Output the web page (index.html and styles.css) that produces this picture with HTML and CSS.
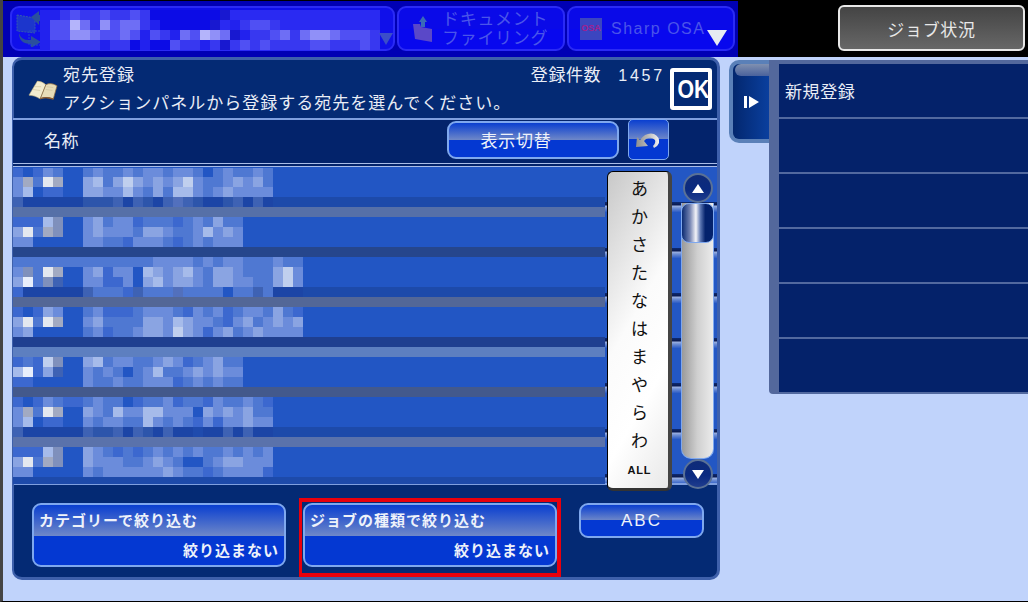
FILE: index.html
```html
<!DOCTYPE html>
<html lang="ja">
<head>
<meta charset="utf-8">
<title>宛先登録</title>
<link rel="stylesheet" href="styles.css">
</head>
<body>
<div class="screen">
  <header class="topbar">
    <nav class="modes">
      <div class="mode mode-wide">
        <svg class="mode-icon" viewBox="0 0 30 36" width="30" height="36">
          <path d="M2 4 L20 7 L20 22 L2 20 Z" fill="#1c36cc" stroke="#3558b0" stroke-dasharray="2 1"/>
          <path d="M16 6 L24 0 L24 4 L30 4 L30 10 L24 10 L24 14 Z" fill="#2a4f9c"/>
          <path d="M4 22 Q6 30 16 29 L16 25 L26 31 L16 37 L16 33 Q4 33 4 22 Z" fill="#2a4f9c"/>
          <path d="M14 20 H28 V34 H14 Z" fill="none" stroke="#2448c8" stroke-dasharray="2 1"/>
        </svg>
        <svg class="mode-mosaic" id="top-mosaic" width="360" height="40" shape-rendering="crispEdges"></svg>
        <span class="tri-faded"></span>
      </div>
      <div class="mode mode-doc">
        <svg viewBox="0 0 22 28" width="22" height="28">
          <path d="M7 7 L11 1 L15 7 H13 V12 H9 V7 Z" fill="#3a6ab8"/>
          <path d="M1 9 L8 9 L9 12 L20 14 V27 L3 24 Z" fill="#5a48c8"/>
        </svg>
        <span class="mode-label stack">ドキュメント<br>ファイリング</span>
      </div>
      <div class="mode mode-osa">
        <span class="osa-logo">OSA</span>
        <span class="mode-label osa-label">Sharp OSA</span>
        <span class="tri-white"></span>
      </div>
    </nav>
    <button class="job">ジョブ状況</button>
  </header>

  <main class="content">
    <section class="panel">
      <div class="head">
        <svg class="book" viewBox="0 0 32 22" width="30" height="21">
          <path d="M1 17 L10 2 Q15 2 19 6 L13 21 Q7 17 1 17 Z" fill="#f3ecd0" stroke="#b8a878" stroke-width=".6"/>
          <path d="M19 6 Q24 3 31 7 L27 21 Q19 18 13 21 Z" fill="#e7dcb8" stroke="#8a6a40" stroke-width=".8"/>
          <path d="M13 21 Q19 19 27 22 L27.5 20.5 Q19 18 13 20 Z" fill="#8a5a30"/>
          <path d="M7 8 L14 8 M5 11 L13 12 M20 8 L27 9 M19 11 L26 12" stroke="#cfc49c" stroke-width=".7"/>
        </svg>
        <div class="head-text">
          <div class="head-top">
            <span>宛先登録</span>
            <span class="count">登録件数<b class="count-num">1457</b></span>
          </div>
          <div class="head-msg">アクションパネルから登録する宛先を選んでください。</div>
        </div>
        <button class="ok"><span class="ok-text">OK</span></button>
      </div>

      <div class="name-row">
        <span class="name-label">名称</span>
        <button class="btn btn-switch">表示切替</button>
        <button class="btn btn-undo">
          <svg viewBox="0 0 26 18" width="26" height="18">
            <defs>
              <linearGradient id="undo-fill" x1="0" x2="1" y1="0" y2="0">
                <stop offset="0" stop-color="#8f8f8f"/>
                <stop offset=".5" stop-color="#b8b8b8"/>
                <stop offset="1" stop-color="#f2f2f2"/>
              </linearGradient>
            </defs>
            <path d="M0 16 L1 6 L4 9 Q10 1 18 3 Q24 6 23 12 Q22 15 18 17 L17 15 Q20 12 19 9 Q15 5 10 8 L8 10 L12 15 Z" fill="url(#undo-fill)"/>
          </svg>
        </button>
      </div>

      <div class="list">
        <div class="row"></div><div class="row"></div><div class="row"></div><div class="row"></div><div class="row"></div><div class="row"></div><div class="row"></div>
      </div>

      <div class="footer">
        <button class="btn filter"><span class="filter-top">カテゴリーで絞り込む</span><span class="filter-val">絞り込まない</span></button>
        <div class="marked">
          <button class="btn filter"><span class="filter-top">ジョブの種類で絞り込む</span><span class="filter-val">絞り込まない</span></button>
        </div>
        <button class="btn btn-abc">ABC</button>
      </div>

      <svg class="list-mosaic" id="list-mosaic" width="592" height="316" shape-rendering="crispEdges"></svg>

      <div class="kana">
        <span>あ</span><span>か</span><span>さ</span><span>た</span><span>な</span><span>は</span><span>ま</span><span>や</span><span>ら</span><span>わ</span><span class="kana-all">ALL</span>
      </div>

      <div class="scroll">
        <span class="round"><i class="up"></i></span>
        <div class="track"><div class="thumb"></div></div>
        <span class="round"><i class="down"></i></span>
      </div>
    </section>

    <aside class="side">
      <div class="tab">
        <span class="tab-shine"></span>
        <svg viewBox="0 0 15 12" width="15" height="12"><path d="M0 0 H3 V12 H0 Z M5 0 L15 6 L5 12 Z" fill="#fff"/></svg>
      </div>
      <div class="actions">
        <div class="action">新規登録</div>
        <div class="action"></div>
        <div class="action"></div>
        <div class="action"></div>
        <div class="action"></div>
        <div class="action"></div>
      </div>
    </aside>
  </main>
</div>
<script src="mosaic.js"></script>
</body>
</html>
```
FILE: styles.css
```css
* { box-sizing: border-box; }
html, body { margin: 0; padding: 0; }
body {
  width: 1028px;
  height: 602px;
  overflow: hidden;
  background: #000;
  font-family: "Liberation Sans", "Noto Sans CJK JP", sans-serif;
}
button { font-family: inherit; padding: 0; cursor: default; }

.screen {
  width: 1028px;
  height: 602px;
  display: flex;
  flex-direction: column;
  background: #c0d3fb;
  border-left: 3px solid #444;
  border-bottom: 1px solid #000;
}

/* top bar */
.topbar {
  height: 57px;
  flex: none;
  display: flex;
  background: #000;
}
.modes {
  width: 735px;
  margin-top: 1px;
  padding: 5px 3px 6px 7px;
  display: flex;
  gap: 2px;
  background: #0000b4;
}
.mode {
  position: relative;
  display: flex;
  align-items: center;
  border: 2px solid #2a2af5;
  border-radius: 9px;
  background: linear-gradient(#0a0ae8 0 50%, #0808ee 50%);
}
.mode-wide { width: 385px; background: #1010ea; }
.mode-icon { margin-left: 3px; flex: none; }
.mode-mosaic { position: absolute; left: 28px; top: 2px; }
.tri-faded {
  position: absolute;
  right: 0;
  top: 25px;
  width: 0;
  height: 0;
  border-left: 7px solid transparent;
  border-right: 7px solid transparent;
  border-top: 12px solid #3b4ec8;
}
.mode-doc { width: 168px; padding-left: 13px; gap: 8px; }
.mode-osa { width: 168px; padding-left: 11px; gap: 9px; }
.mode-label {
  color: #4a55ea;
  font-size: 17px;
  letter-spacing: .7px;
  white-space: nowrap;
}
.stack { line-height: 19px; text-align: center; }
.osa-label { font-size: 16px; letter-spacing: 1.5px; }
.osa-logo {
  width: 22px;
  height: 22px;
  flex: none;
  background: #3b45c0;
  color: #a02090;
  font-size: 9px;
  font-weight: 700;
  line-height: 20px;
  text-align: center;
}
.tri-white {
  position: absolute;
  right: 6px;
  top: 22px;
  width: 0;
  height: 0;
  border-left: 10px solid transparent;
  border-right: 10px solid transparent;
  border-top: 16px solid #e6eaf2;
}
.job {
  width: 187px;
  height: 46px;
  margin: 5px 0 0 100px;
  border: 2px solid #e8e8e8;
  border-radius: 6px;
  background: linear-gradient(#444, #676767);
  color: #e8e8e8;
  font-size: 17px;
  letter-spacing: .7px;
}

/* main */
.content {
  flex: 1;
  display: flex;
  align-items: flex-start;
  padding-left: 9px;
}
.panel {
  position: relative;
  width: 708px;
  height: 523px;
  display: flex;
  flex-direction: column;
  background: #042a74;
  border: solid #3e60ab;
  border-width: 3px 3px 3px 2px;
  border-radius: 10px;
  color: #e9edf6;
}
.head {
  height: 58px;
  flex: none;
  display: flex;
  align-items: center;
  padding: 0 5px 0 14px;
  font-size: 17px;
  letter-spacing: 1px;
}
.book { flex: none; }
.head-text { flex: 1; margin-left: 5px; padding-top: 1px; }
.head-top { display: flex; justify-content: space-between; line-height: 28px; }
.head-msg { line-height: 28px; white-space: nowrap; }
.count { margin-right: 5px; letter-spacing: .6px; }
.count-num { font-weight: 400; margin-left: 17px; letter-spacing: 2.8px; font-size: 16px; }
.ok {
  width: 42px;
  height: 42px;
  flex: none;
  border: 4px solid #fff;
  border-radius: 3px;
  background: #042a74;
  color: #fff;
  font-size: 26px;
  font-weight: 700;
  line-height: 30px;
  letter-spacing: 0;
}
.ok-text { display: inline-block; transform: scaleX(.82); }

.name-row {
  height: 49px;
  flex: none;
  display: flex;
  align-items: center;
  margin-left: -1px;
  padding: 0 48px 4px 31px;
  background: #03236b;
  border-top: 2px solid #7f9fdf;
  border-bottom: 4px double #a9bde8;
}
.name-label { flex: 1; font-size: 17px; letter-spacing: .6px; }
.btn {
  border: 2px solid #7fa8ee;
  border-radius: 9px;
  background: linear-gradient(#0a3fd0, #6f88c8 50%, #0438d2 50%);
  color: #eef2fa;
  font-size: 17px;
  letter-spacing: .7px;
}
.btn-switch { width: 172px; height: 38px; padding-right: 34px; }
.btn-undo {
  width: 41px;
  height: 41px;
  margin-left: 9px;
  border-width: 1px;
  border-radius: 5px;
  display: flex;
  align-items: center;
  justify-content: center;
}

.list {
  height: 317px;
  flex: none;
  display: flex;
  flex-direction: column;
}
.row {
  flex: 1;
  background: linear-gradient(#2357c4 0 calc(100% - 10px), #0e2a70 calc(100% - 10px), #0a1a50 calc(100% - 7px), #9db2e2 calc(100% - 6px), #6f8fd4 calc(100% - 4px), #2c5cc6 100%);
}

.footer {
  flex: 1;
  display: flex;
  align-items: flex-start;
  padding: 18px 0 0 18px;
  border-top: 2px solid #7f9fdf;
  margin-top: -1px;
}
.filter {
  width: 254px;
  height: 64px;
  display: flex;
  flex-direction: column;
  background: linear-gradient(#0a3fd0, #6f88c8 31px, #0438d2 31px);
  font-size: 15px;
  font-weight: 700;
  letter-spacing: 1px;
}
.filter-top { align-self: flex-start; height: 31px; line-height: 32px; padding-left: 5px; white-space: nowrap; }
.filter-val { align-self: flex-end; line-height: 30px; padding-right: 5px; }
.marked {
  margin: -5px 0 0 13px;
  padding: 1px 0 6px 1px;
  border: 4px solid #e8000c;
  border-left-width: 3px;
}
.btn-abc { width: 125px; height: 35px; margin-left: 18px; padding-right: 0; font-size: 17px; letter-spacing: 2px; }

/* items lying over the list */
.list-mosaic { position: absolute; left: -1px; top: 108px; }
.kana {
  position: absolute;
  left: 593px;
  top: 111px;
  width: 65px;
  height: 320px;
  display: flex;
  flex-direction: column;
  align-items: center;
  justify-content: space-between;
  padding: 6px 0 6px 3px;
  background: linear-gradient(120deg, #c8c8c8, #fbfbfb 45%, #fff 70%, #e8e8e8);
  border: 1px solid #000;
  border-right: 4px solid #444;
  border-bottom: 3px solid #333;
  border-radius: 6px;
  color: #111;
  font-size: 17px;
  line-height: 24px;
}
.kana-all { font-size: 11px; font-weight: 700; letter-spacing: .8px; }
.scroll {
  position: absolute;
  left: 667px;
  top: 113px;
  width: 33px;
  height: 316px;
  display: flex;
  flex-direction: column;
  align-items: center;
}
.round {
  width: 30px;
  height: 30px;
  flex: none;
  display: flex;
  align-items: center;
  justify-content: center;
  border-radius: 50%;
  background: linear-gradient(#0f2b78, #0a2a80 55%, #1f3c8e);
  border: 2px solid #5a7196;
}
.up, .down { width: 0; height: 0; border-left: 6px solid transparent; border-right: 6px solid transparent; }
.up { border-bottom: 9px solid #fff; }
.down { border-top: 9px solid #fff; }
.track {
  width: 33px;
  flex: 1;
  background: linear-gradient(90deg, #9a9a9a, #d0d0d0 50%, #ebebeb);
  border: solid #7fa8ee;
  border-width: 0 1px 1px;
  border-radius: 0 0 10px 10px;
}
.thumb {
  height: 40px;
  margin: 0 -1px;
  border: 1px solid #7fa8ee;
  border-radius: 8px;
  background: linear-gradient(90deg, #0a2a72, #7080b0 25%, #f4f4f8 45%, #5a74b0 60%, #04226c 75%);
}

/* right column */
.side {
  display: flex;
  align-items: flex-start;
  margin-left: 9px;
}
.tab {
  width: 40px;
  height: 83px;
  margin-top: 3px;
  position: relative;
  display: flex;
  align-items: center;
  justify-content: center;
  padding-left: 1px;
  border: 4px solid #5a80b8;
  border-right: 0;
  border-radius: 10px 0 0 10px;
  background: linear-gradient(90deg, #03276e, #0a3f9e);
}
.tab-shine {
  position: absolute;
  left: 2px;
  right: 0;
  top: 0;
  height: 12px;
  border-radius: 6px 0 0 6px;
  background: linear-gradient(#8090b0, #4a629c);
}
.actions {
  width: 259px;
  margin-top: 3px;
  background: #04226a;
  border-left: 10px solid #53689c;
  border-top: 4px solid #53689c;
  padding-bottom: 3px;
  border-bottom-left-radius: 4px;
}
.action {
  height: 55px;
  padding-left: 6px;
  border-bottom: 2px solid #52699f;
  color: #e9edf6;
  font-size: 17px;
  letter-spacing: .6px;
  line-height: 58px;
}
.action:last-child { margin-bottom: -3px; }
```
FILE: mosaic.js
```js
// Blurred (pixelated) private names, as blocks of 10px.
var NS = 'http://www.w3.org/2000/svg';
function block(svg, x, y, w, h, fill) {
  var r = document.createElementNS(NS, 'rect');
  r.setAttribute('x', x); r.setAttribute('y', y);
  r.setAttribute('width', w); r.setAttribute('height', h);
  r.setAttribute('fill', fill);
  svg.appendChild(r);
}
function line(svg, y, h, text, pal) {
  for (var i = 0; i < text.length; i++) {
    var c = pal[text[i]];
    if (c) block(svg, i * 10, y, 10, h, c);
  }
}
var P = { a:'#2256c4', i:'#3c68cf', b:'#4f78d2', c:'#6b8cdb', d:'#8aa4e2', e:'#a6bbea', f:'#c0cfee', g:'#e4e8ef', w:'#e8eefb', h:'#a2aac2', k:'#7f90bc',
          j:'#1f4bad', l:'#2d55ab', m:'#3e62b4', n:'#5270bd', z:'#1c45a6' };
var L = document.getElementById('list-mosaic');
block(L, 0, 0, 592, 316, '#2256c4');
var rows = [
  { y:0, lines:['iaicbaabcbbcbccbccbabcbbcb','chbghaadebdfdcdcdfcbbcdcdb','ceaiiaaddccecbdbeecbcdcccc'], dark:'mzzzzzzlllmzmlzmnmlzzlmzmz', stripe:'#5670a8' },
  { y:49, lines:['iiiekaacdbccibbbibcbdbb','dgbhkaacdcccbddcbbcecdc','ccaaaaaccbbicccbibcbccc'], stripe:'#26468c' },
  { y:89, lines:['bbbbbbbbbbbbbbccccbcbccbbbcbb','ckbghaacdiccaedcdecbddcbbbdfc','dwbkmaacciicadecddcbddccbbdfc'], dark:'izzzzzzmbbbimbbbnbbbbabbmbzzz', stripe:'#536797' },
  { y:139, lines:['iaidcaabciiibcccbicbcibccbdbi','dgbghaacdbbbbddcedccbicdbcdcd','cdaaaaabcibbcddcfdcicdbcdcccc'], stripe:'#5d7fc0', darkTop:'#1f3f90' },
  { y:189, lines:['ibifkaadebccbbcdcibcdbb','ewidmaacbcbabcebbcdcdcc','iiaaaaacbbcbbcccibcbcbb'], stripe:'#43598c' },
  { y:229, lines:['iaicbiibcbbaibbcibbicbbcbi','chbghaadcbecceecccadcdcdbb','ceaiiaacbccbbecbcbiciccdcc'], dark:'mzzzzzzmllmzmlzmzzjzzmzmzz', stripe:'#5a72ab' },
  { y:279, lines:['iiiekaadcbibibcbcbcbbcbcbc','dgbhkaadcccbbcdcbaabcddccc','ccaaaaacbccccccdcbbibcccci'] }
];
rows.forEach(function (r, idx) {
  var hs = [idx === 0 ? 9 : 10, 10, 10];
  var y = r.y;
  r.lines.forEach(function (t, k) { line(L, y, hs[k], t, P); y += hs[k]; });
  if (r.darkTop) { block(L, 0, y, 592, 10, r.darkTop); y += 10; }
  if (r.dark) { block(L, 0, y, 592, 10, '#1d4aaa'); line(L, y, 10, r.dark, P); y += 10; }
  if (r.stripe) { block(L, 0, y, 592, 10, r.stripe); }
});
block(L, 0, 309, 592, 7, '#1d4aaa');

var T = document.getElementById('top-mosaic');
var Q = { 0:'#0c0ce6', 1:'#2222ee', 2:'#3838f0', 3:'#5050f3', 4:'#6e6ef5', 5:'#9090f8', 6:'#b4b4fb', 7:'#1818d0', 8:'#2a2af2' };
['1123223223200000007888888888888888',
 '1336425344210000078123328888888888',
 '1335543343132143654712234245543332',
 '1222221220100322127232322223322232'].forEach(function (t, k) {
  line(T, k * 10, 10, t, Q);
});
```
